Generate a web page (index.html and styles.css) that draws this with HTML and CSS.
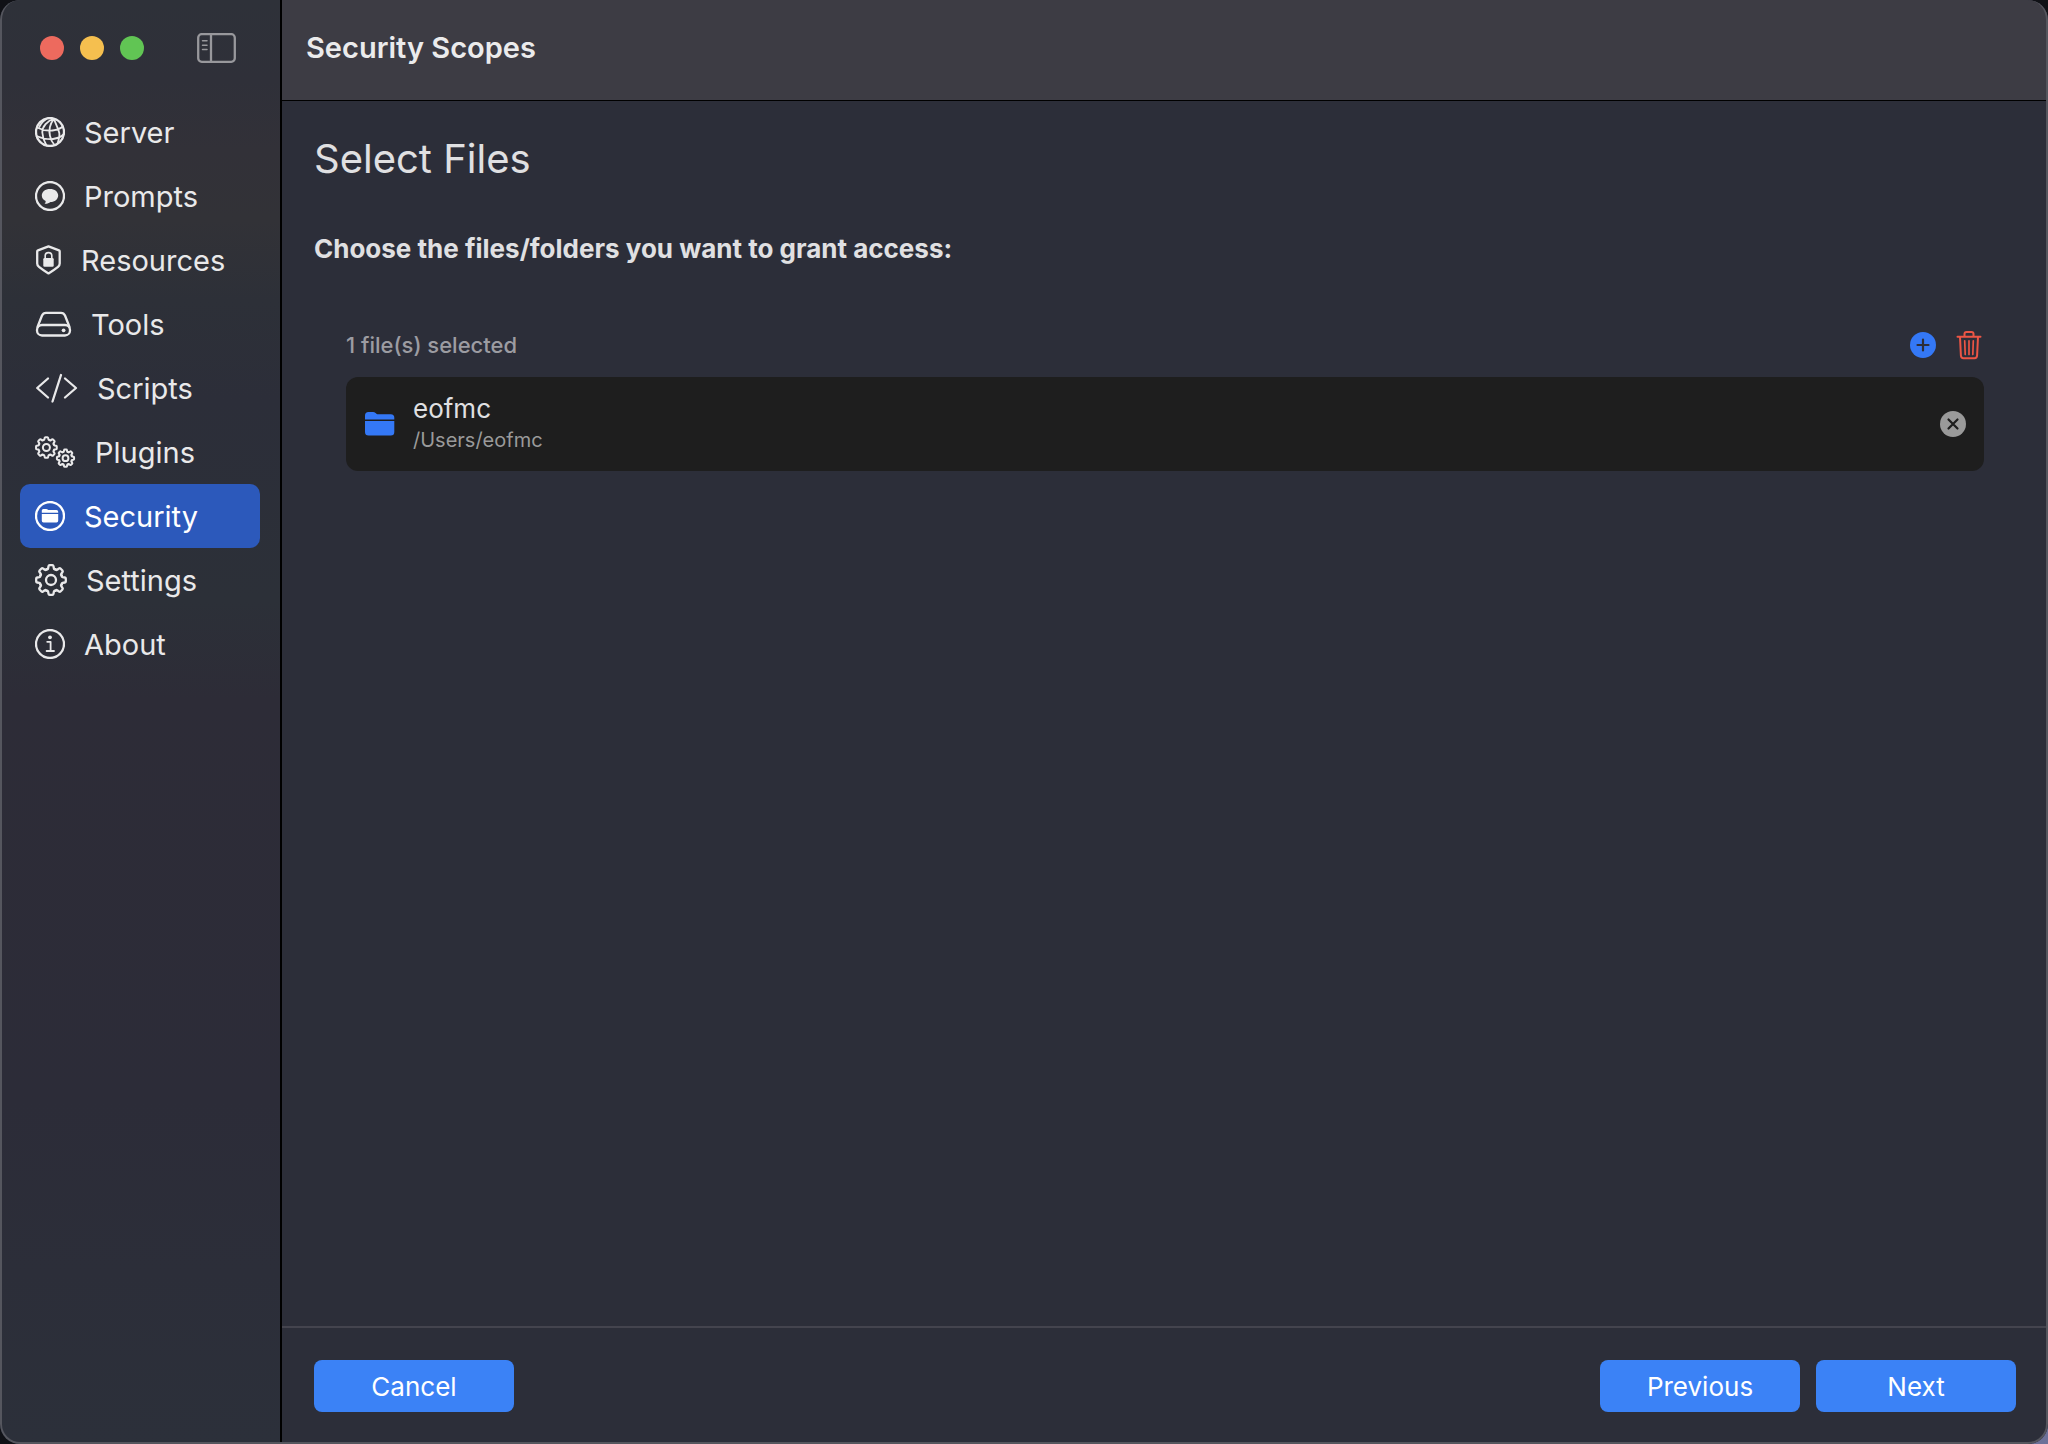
FILE: index.html
```html
<!DOCTYPE html>
<html lang="en">

<head>
    <title>Security Scopes</title>
    <meta charset="UTF-8" />
    <meta name="viewport" content="width=device-width, initial-scale=1.0" />
    <link rel="stylesheet" href="styles.css">
</head>

<body>
    <!-- shared gear outline: one tooth, repeated around the hub -->
    <svg class="defs" aria-hidden="true">
        <defs>
            <path id="tooth" vector-effect="non-scaling-stroke" d="M-4.47 -10.8Q-3.2 -10.3 -2.9 -11.6L-2.5 -13.8Q-2.3 -14.8 -1.4 -14.8H1.4Q2.3 -14.8 2.5 -13.8L2.9 -11.6Q3.2 -10.3 4.47 -10.8" />
            <g id="gear">
                <use href="#tooth" />
                <use href="#tooth" transform="rotate(45)" />
                <use href="#tooth" transform="rotate(90)" />
                <use href="#tooth" transform="rotate(135)" />
                <use href="#tooth" transform="rotate(180)" />
                <use href="#tooth" transform="rotate(225)" />
                <use href="#tooth" transform="rotate(270)" />
                <use href="#tooth" transform="rotate(315)" />
                <circle r="5" vector-effect="non-scaling-stroke" />
            </g>
        </defs>
    </svg>
    <div class="window">
        <aside class="sidebar">
            <div class="titlebar">
                <div class="lights">
                    <button class="light red" type="button" aria-label="Close"></button>
                    <button class="light yellow" type="button" aria-label="Minimize"></button>
                    <button class="light green" type="button" aria-label="Zoom"></button>
                </div>
                <button class="icon-button toggle" type="button" aria-label="Toggle Sidebar">
                    <svg class="line" width="40" height="30" viewBox="0 0 40 30">
                        <rect x="2.2" y="1.2" width="36.6" height="27.6" rx="3.5" />
                        <path d="M15 1.5V28.5" />
                        <path stroke-width="1.5" d="M6.5 7.7H11M6.5 12.2H11M6.5 16.6H11" />
                    </svg>
                </button>
            </div>
            <nav class="menu">
                <a href="#server">
                    <svg class="line" width="30" height="30" viewBox="0 0 30 30">
                        <circle cx="15" cy="15" r="14" />
                        <path stroke-width="1.8" d="M19 1.8C12.5 3.5 7 9.5 7.3 15.5Q7.6 22 11.5 28.5M19 1.8C15 7 13.5 13 15 19Q16.2 24.5 19.5 28M19 1.8C20.5 7 23.5 12 24.3 16Q24.8 20 22.5 26.5M11.5 2Q7.5 4 4.5 9.5M2 10.5Q10 14.5 17.5 13.5Q24.5 12.5 27.8 9.5M1.5 19Q11 23 18 22Q25 21 28.5 17.5" />
                    </svg>
                    <span>Server</span>
                </a>
                <a href="#prompts">
                    <svg class="line" width="30" height="30" viewBox="0 0 30 30">
                        <circle cx="15" cy="15" r="14" />
                        <path class="solid" d="M15 8C19.7 8 23.2 10.7 23.2 14.5S19.7 21 15.5 21C13.5 22.6 11.5 23 9.6 22.7C10.4 21.9 10.8 21 10.7 20C8.2 18.9 6.8 16.9 6.8 14.5C6.8 10.7 10.3 8 15 8Z" />
                    </svg>
                    <span>Prompts</span>
                </a>
                <a href="#resources">
                    <svg class="line" width="27" height="30" viewBox="0 0 27 30">
                        <path d="M13.5 1.4L24 5.3Q24.7 5.6 24.7 6.5V18.5Q24.7 20.5 23 21.9Q19 25.2 13.5 28.4Q8 25.2 4 21.9Q2.2 20.5 2.2 18.5V6.5Q2.2 5.6 3 5.3Z" />
                        <rect class="solid" x="8.3" y="13" width="10.4" height="8.8" rx="1.2" />
                        <path stroke-width="1.6" d="M10.2 13.5V10.8Q10.2 7.6 13.5 7.6T16.8 10.8V13.5" />
                    </svg>
                    <span>Resources</span>
                </a>
                <a href="#tools">
                    <svg class="line" width="37" height="30" viewBox="0 0 37 30">
                        <path d="M2.5 18L7 6.500Q8.2 3.800 11 3.800H26Q28.800 3.800 30 6.500L34.500 18" />
                        <rect x="2" y="16" width="33" height="10.5" rx="5" />
                        <circle class="solid" cx="28.6" cy="21.3" r="1.9" />
                    </svg>
                    <span>Tools</span>
                </a>
                <a href="#scripts">
                    <svg class="line" width="43" height="30" viewBox="0 0 43 30">
                        <path d="M13 5.5L2.2 15L13 24.5M30 5.5L41 15L30 24.5M26 2L17.5 28.5" />
                    </svg>
                    <span>Scripts</span>
                </a>
                <a href="#plugins">
                    <svg class="line thin" width="41" height="34" viewBox="0 0 41 34">
                        <use href="#gear" transform="translate(11.4 12.5) scale(.7)" />
                        <use href="#gear" transform="translate(30.5 23.2) scale(.58)" />
                    </svg>
                    <span>Plugins</span>
                </a>
                <a href="#security" class="active" aria-current="page">
                    <svg class="line" width="30" height="30" viewBox="0 0 30 30">
                        <circle cx="15" cy="15" r="14" />
                        <path class="fill" d="M6.8 11.8V9.6Q6.8 8 8.4 8H11.3Q12 8 12.6 8.5L13.3 9H21.5Q23.2 9 23.2 10.7V11.8ZM6.8 13H23.2V19.8Q23.2 21.6 21.5 21.6H8.5Q6.8 21.6 6.8 19.8Z" />
                    </svg>
                    <span>Security</span>
                </a>
                <a href="#settings">
                    <svg class="line" width="32" height="32" viewBox="-16 -16 32 32">
                        <use href="#gear" />
                    </svg>
                    <span>Settings</span>
                </a>
                <a href="#about">
                    <svg class="line" width="30" height="30" viewBox="0 0 30 30">
                        <circle cx="15" cy="15" r="14" />
                        <circle class="fill" cx="15" cy="8.3" r="1.9" />
                        <path stroke-width="1.8" d="M12.2 12.8H15.6V21.8M11.6 22H19" />
                    </svg>
                    <span>About</span>
                </a>
            </nav>
        </aside>

        <div class="content">
            <header class="toolbar">Security Scopes</header>
            <main class="page">
                <h1>Select Files</h1>
                <h2>Choose the files/folders you want to grant access:</h2>
                <section class="files">
                    <div class="files-head">
                        <span>1 file(s) selected</span>
                        <div class="files-actions">
                            <button class="icon-button" type="button" aria-label="Add File">
                                <svg width="26" height="26" viewBox="0 0 26 26">
                                    <circle cx="13" cy="13" r="13" fill="#3478f6" />
                                    <path d="M13 7.5V18.5M7.5 13H18.5" stroke="#2c2e39" stroke-width="2.2" stroke-linecap="round" />
                                </svg>
                            </button>
                            <button class="icon-button trash" type="button" aria-label="Remove All">
                                <svg class="line thin" width="26" height="30" viewBox="0 0 26 30">
                                    <path d="M1.5 6.700H24.5M8.5 6.500V3.800Q8.5 1.900 10.5 1.900H15.5Q17.5 1.900 17.5 3.800V6.500M4 7L4.900 25.500Q5 28.200 7.5 28.200H18.5Q21 28.200 21.100 25.500L22 7" />
                                    <path stroke-width="1.7" d="M8.700 10.8L9.200 24.5M13 10.8V24.5M17.300 10.8L16.800 24.5" />
                                </svg>
                            </button>
                        </div>
                    </div>
                    <ul class="file-list">
                        <li>
                            <svg width="30" height="24" viewBox="0 0 30 24">
                                <path fill="#3478f6" d="M0 7.5V3.5Q0 0 3.5 0H8Q9.5 0 10.6 1L11.4 1.7Q12.2 2.3 13.5 2.3H25.8Q29.3 2.3 29.3 5.8V7.5ZM0 9H29.3V20Q29.3 23.5 25.8 23.5H3.5Q0 23.5 0 20Z" />
                            </svg>
                            <div class="file-text">
                                <span class="file-name">eofmc</span>
                                <span class="file-path">/Users/eofmc</span>
                            </div>
                            <button class="icon-button" type="button" aria-label="Remove eofmc">
                                <svg width="26" height="26" viewBox="0 0 26 26">
                                    <circle cx="13" cy="13" r="13" fill="#9a9a9a" />
                                    <path d="M8.5 8.5L17.5 17.5M17.5 8.5L8.5 17.5" stroke="#1e1e1e" stroke-width="2.2" stroke-linecap="round" />
                                </svg>
                            </button>
                        </li>
                    </ul>
                </section>
            </main>
            <footer class="actions">
                <button class="button" type="button">Cancel</button>
                <div class="steps">
                    <button class="button" type="button">Previous</button>
                    <button class="button" type="button">Next</button>
                </div>
            </footer>
        </div>
    </div>
</body>

</html>
```
FILE: styles.css
```css
* {
    box-sizing: border-box;
}

body {
    margin: 0;
    background: linear-gradient(to bottom right, #101116 50%, #6d7199);
    color: #e0e0e2;
    font-family: Inter, system-ui, 'Helvetica Neue', sans-serif;
    font-size: 26px;
}

h1,
h2,
ul {
    margin: 0;
    padding: 0;
}

.defs {
    position: absolute;
    width: 0;
    height: 0;
}

.window {
    position: relative;
    display: flex;
    min-height: 100vh;
    border-radius: 20px;
    background-color: #2c2e39;
    overflow: hidden;
}

/* thin light edge around the window */
.window::after {
    content: "";
    position: absolute;
    inset: 0;
    border: 2px solid #55565e;
    border-top: 0;
    border-radius: 20px;
    pointer-events: none;
}

/* icons */
svg {
    display: block;
    flex: none;
}

.line {
    fill: none;
    stroke: currentColor;
    stroke-width: 2.3;
    stroke-linecap: round;
    stroke-linejoin: round;
}

.thin {
    stroke-width: 2;
}

.solid,
.fill {
    fill: currentColor;
    stroke: none;
}

.icon-button {
    padding: 0;
    border: 0;
    background: none;
    color: inherit;
}

/* sidebar */
.sidebar {
    flex: none;
    width: 282px;
    border-right: 2px solid #000;
    background: linear-gradient(#2e3139 0, #2f3039 80px, #323138 150px, #323237 220px, #2d3038 300px, #2c2e39 400px, #2c3038 600px, #2d2c37 700px, #2c2c38 1100px, #2c303a 100%);
}

.titlebar {
    display: flex;
    align-items: center;
    justify-content: space-between;
    height: 100px;
    padding: 0 44px 4px 40px;
}

.lights {
    display: flex;
    gap: 16px;
}

.light {
    width: 24px;
    height: 24px;
    padding: 0;
    border: 0;
    border-radius: 50%;
}

.red {
    background-color: #ed6a5e;
}

.yellow {
    background-color: #f5bf4f;
}

.green {
    background-color: #61c554;
}

.toggle {
    color: #98989c;
}

.menu {
    padding: 0 20px;
}

.menu a {
    display: flex;
    align-items: center;
    gap: 19px;
    height: 64px;
    padding: 0 15px;
    border-radius: 10px;
    color: #e9e9ea;
    font-size: 29px;
    text-decoration: none;
}

.menu .active {
    background-color: #2c59bb;
    color: #fff;
}

/* content */
.content {
    display: flex;
    flex: 1;
    flex-direction: column;
}

.toolbar {
    display: flex;
    align-items: center;
    height: 101px;
    padding: 0 24px 6px;
    border-bottom: 1px solid #000;
    background-color: #3d3c44;
    color: #ebebec;
    font-size: 29px;
    font-weight: 600;
}

.page {
    flex: 1;
    padding: 32px;
}

h1 {
    font-size: 40px;
    font-weight: 400;
    line-height: 52px;
}

h2 {
    margin-top: 48px;
    font-size: 26px;
    font-weight: 700;
    line-height: 32px;
}

.files {
    padding: 64px 32px;
}

.files-head {
    display: flex;
    align-items: center;
    justify-content: space-between;
    height: 32px;
    margin-bottom: 16px;
    padding-right: 2px;
    color: #9c9ca2;
    font-size: 22px;
    font-weight: 500;
}

.files-actions {
    display: flex;
    align-items: center;
    gap: 20px;
}

.trash {
    color: #eb5545;
}

.file-list {
    list-style: none;
}

.file-list li {
    display: flex;
    align-items: center;
    gap: 18px;
    padding: 16px 18px 16px 19px;
    border-radius: 12px;
    background-color: #1e1e1e;
}

.file-text {
    display: flex;
    flex: 1;
    flex-direction: column;
}

.file-name {
    line-height: 32px;
}

.file-path {
    color: #9a9a9a;
    font-size: 20px;
    line-height: 30px;
}

/* footer */
.actions {
    display: flex;
    justify-content: space-between;
    padding: 32px;
    border-top: 2px solid #44444e;
}

.steps {
    display: flex;
    gap: 16px;
}

.button {
    width: 200px;
    height: 52px;
    border: 0;
    border-radius: 8px;
    background-color: #3b82f6;
    color: #fff;
    font-family: inherit;
    font-size: 26px;
}
```
